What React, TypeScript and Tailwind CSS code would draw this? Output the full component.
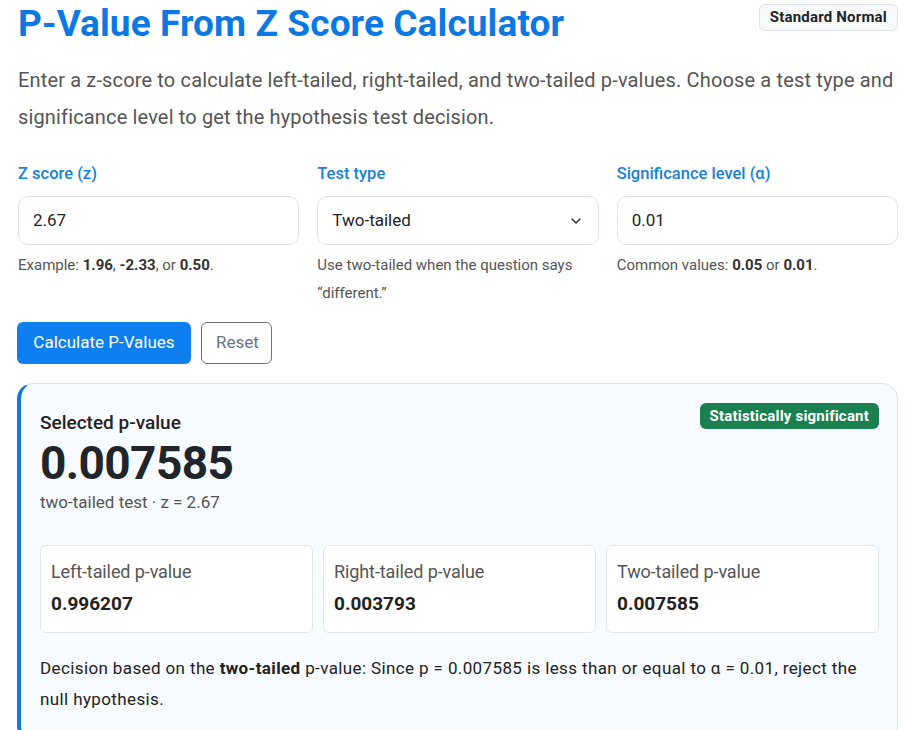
import React from 'react';
import { ChevronDown } from 'lucide-react';

const font = { fontFamily: 'Roboto, "Noto Sans", Arial, sans-serif' };

const SubStat: React.FC<{ label: string; value: string }> = ({ label, value }) => (
  <div className="bg-white border border-[#e1e6ec] rounded-md h-[88px] px-[10px] pt-[13px]">
    <div className="text-[18px] text-[#555] tracking-[-0.1px] leading-[26px]">{label}</div>
    <div className="text-[19px] font-bold text-[#222] mt-[7px] leading-[24px]">{value}</div>
  </div>
);

export default function App() {
  return (
    <div className="bg-white h-[730px] overflow-hidden pl-[18px] pr-[20px] text-[#212529]" style={font}>
      {/* Header */}
      <div className="flex items-start justify-between">
        <h1 className="text-[37px] font-bold text-[#0b78e3] leading-[48px] tracking-[0.1px] mt-0">
          P-Value From Z Score Calculator
        </h1>
        <span className="mt-[4px] text-[15px] font-bold bg-[#f8f9fa] border border-[#dee2e6] rounded-md px-[10px] h-[27px] flex items-center tracking-[0.2px]">
          Standard Normal
        </span>
      </div>

      <p className="mt-[14px] text-[20px] text-[#555] leading-[37px] tracking-[0.15px]">
        Enter a z-score to calculate left-tailed, right-tailed, and two-tailed p-values. Choose a test type and
        significance level to get the hypothesis test decision.
      </p>

      {/* Form */}
      <div className="grid grid-cols-3 gap-[18px] mt-[26px]">
        <div>
          <label className="block text-[16.5px] font-medium text-[#1b7fd6] leading-[24px]">Z score (z)</label>
          <div className="mt-[10px] h-[49px] border border-[#dee2e6] rounded-[10px] flex items-center px-[14px] text-[17px]">
            2.67
          </div>
          <p className="mt-[6px] text-[15px] text-[#555] leading-[28px]">
            Example: <b className="text-[#333]">1.96</b>, <b className="text-[#333]">-2.33</b>, or <b className="text-[#333]">0.50</b>.
          </p>
        </div>
        <div>
          <label className="block text-[16.5px] font-medium text-[#1b7fd6] leading-[24px]">Test type</label>
          <div className="mt-[10px] h-[49px] border border-[#dee2e6] rounded-[10px] flex items-center justify-between px-[14px] text-[17px]">
            <span>Two-tailed</span>
            <ChevronDown className="w-4 h-4 text-[#333]" strokeWidth={2.2} />
          </div>
          <p className="mt-[6px] text-[15px] text-[#555] leading-[28px] pr-[10px]">
            Use two-tailed when the question says “different.”
          </p>
        </div>
        <div>
          <label className="block text-[16.5px] font-medium text-[#1b7fd6] leading-[24px]">Significance level (α)</label>
          <div className="mt-[10px] h-[49px] border border-[#dee2e6] rounded-[10px] flex items-center px-[14px] text-[17px]">
            0.01
          </div>
          <p className="mt-[6px] text-[15px] text-[#555] leading-[28px]">
            Common values: <b className="text-[#333]">0.05</b> or <b className="text-[#333]">0.01</b>.
          </p>
        </div>
      </div>

      {/* Buttons */}
      <div className="flex gap-[10px] mt-[15px] -ml-[1px]">
        <button className="h-[42px] px-[14px] rounded-md bg-[#0d7ff0] text-white text-[17px] w-[174px]">
          Calculate P-Values
        </button>
        <button className="h-[42px] px-[14px] rounded-md border border-[#6c757d] text-[#6c757d] text-[17px] bg-white w-[71px]">
          Reset
        </button>
      </div>

      {/* Result card */}
      <div className="mt-[19px] -ml-[1px] border border-[#dce5ef] border-l-4 border-l-[#0b78e3] rounded-2xl bg-[#f7faff] pl-[19px] pr-[18px] pt-[19px] pb-[26px]">
        <div className="flex items-start justify-between">
          <div>
            <div className="text-[19px] font-medium text-[#222] leading-[26px] mt-[7px]">Selected p-value</div>
            <div className="text-[46px] font-bold text-[#212529] leading-[50px] mt-[2px] tracking-[-0.6px]">0.007585</div>
            <div className="text-[17px] text-[#555] leading-[26px] mt-[1px]">two-tailed test · z = 2.67</div>
          </div>
          <span className="bg-[#1b8050] text-white text-[15px] font-bold rounded-md px-[10px] h-[26px] flex items-center tracking-[0.2px]">
            Statistically significant
          </span>
        </div>

        <div className="grid grid-cols-3 gap-[10px] mt-[30px]">
          <SubStat label="Left-tailed p-value" value="0.996207" />
          <SubStat label="Right-tailed p-value" value="0.003793" />
          <SubStat label="Two-tailed p-value" value="0.007585" />
        </div>

        <p className="mt-[20px] text-[17px] text-[#222] leading-[31px] tracking-[0.38px]">
          Decision based on the <b>two-tailed</b> p-value: Since p = 0.007585 is less than or equal to α = 0.01, reject the
          null hypothesis.
        </p>
      </div>
    </div>
  );
}
